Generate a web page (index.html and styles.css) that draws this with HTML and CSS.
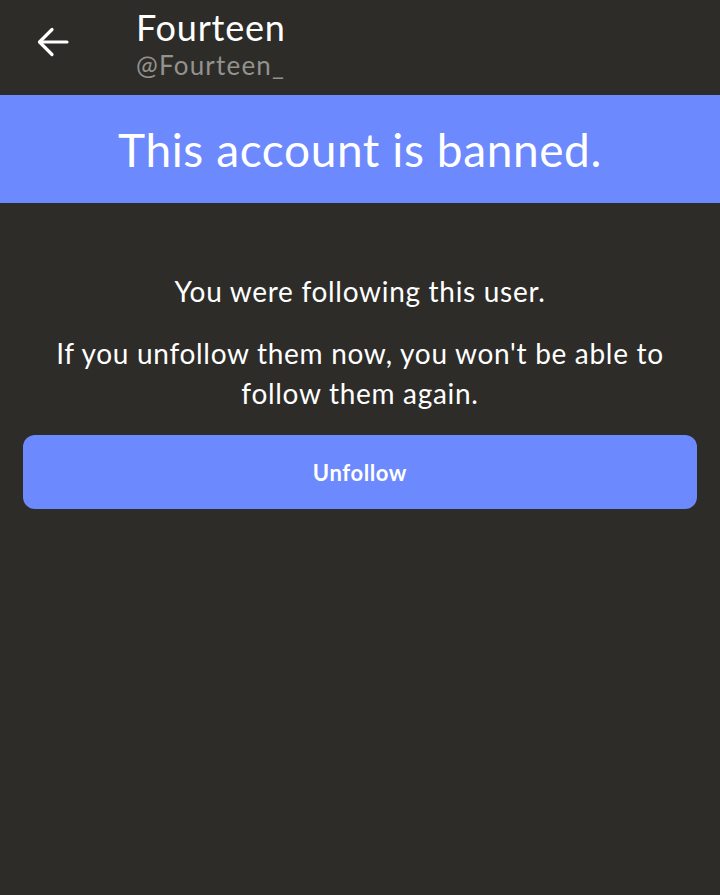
FILE: index.html
```html
<!DOCTYPE html>
<html>
<head>
<meta charset="utf-8">
<link rel="stylesheet" href="styles.css">
</head>
<body>
<header class="topbar">
  <button class="back" aria-label="Back">
    <svg width="32" height="32" viewBox="0 0 32 32" fill="none" stroke="#ffffff" stroke-width="3.2" stroke-linecap="round" stroke-linejoin="round"><path d="M30 16H3"/><path d="M15 3.5L2.5 16 15 28.5"/></svg>
  </button>
  <div class="titles">
    <div class="name">Fourteen</div>
    <div class="handle">@Fourteen_</div>
  </div>
</header>
<section class="banner">This account is banned.</section>
<main class="content">
  <p class="msg">You were following this user.</p>
  <p class="msg warn">If you unfollow them now, you won't be able to follow them again.</p>
  <button class="unfollow">Unfollow</button>
</main>
</body>
</html>
```
FILE: styles.css
```css
html, body {
  margin: 0;
  padding: 0;
  background: #2d2c29;
  height: 100%;
}
body {
  font-family: "Lato", "Open Sans", sans-serif;
  color: #ffffff;
}
.topbar {
  height: 95px;
  display: flex;
  align-items: flex-start;
  box-sizing: border-box;
}
.back {
  background: none;
  border: 0;
  padding: 0;
  margin: 26px 0 0 37px;
  width: 32px;
  height: 32px;
  display: flex;
}
.titles {
  margin-left: 67px;
  padding-top: 6px;
}
.name {
  font-size: 36px;
  line-height: 42px;
  letter-spacing: 0.8px;
  color: #ffffff;
}
.handle {
  margin-top: 2px;
  font-size: 26px;
  line-height: 30px;
  color: #93928f;
  letter-spacing: 1.2px;
}
.banner {
  background: #6c89fe;
  height: 108px;
  display: flex;
  align-items: center;
  justify-content: center;
  font-size: 46px;
  letter-spacing: 0.6px;
  color: #ffffff;
}
.content {
  padding: 68px 23px 0;
  display: flex;
  flex-direction: column;
  align-items: stretch;
}
.msg {
  margin: 0;
  text-align: center;
  font-size: 28px;
  line-height: 40px;
  letter-spacing: 0.7px;
}
.warn {
  margin-top: 22px;
  padding: 0 20px;
}
.unfollow {
  margin-top: 22px;
  height: 74px;
  border: 0;
  border-radius: 12px;
  background: #6c89fe;
  color: #ffffff;
  font-family: "Lato", "Open Sans", sans-serif;
  font-weight: 700;
  font-size: 22px;
  letter-spacing: 0.6px;
}
```
